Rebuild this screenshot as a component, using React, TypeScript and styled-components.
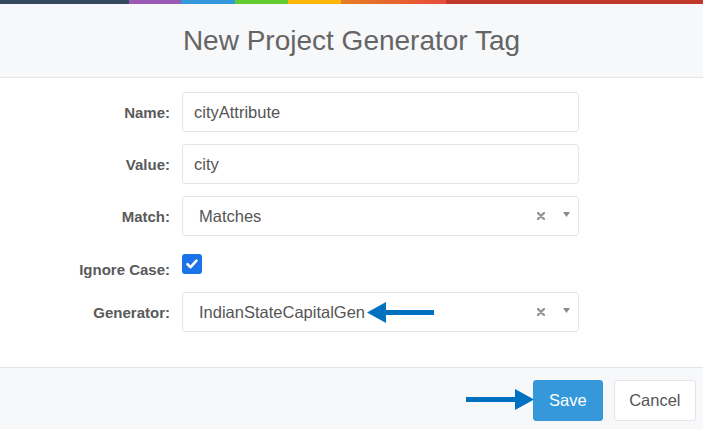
import React from "react";
import styled, { createGlobalStyle } from "styled-components";

const Global = createGlobalStyle`
  html, body { margin: 0; padding: 0; background: #ffffff; }
  body { font-family: "Liberation Sans", Arial, sans-serif; overflow: hidden; }
  * { box-sizing: border-box; }
`;

const Modal = styled.div`
  width: 703px;
  height: 429px;
  display: flex;
  flex-direction: column;
  overflow: hidden;
  background: #ffffff;
`;

const ColorLine = styled.div`
  height: 4px;
  flex: none;
  background: linear-gradient(
    to right,
    #34495e 0px, #34495e 129px,
    #9b59b6 129px, #9b59b6 181px,
    #3498db 181px, #3498db 235px,
    #62cb31 235px, #62cb31 288px,
    #ffb606 288px, #ffb606 341px,
    #e67e22 341px, #e74c3c 446px,
    #c0392b 446px, #c0392b 703px
  );
`;

const Header = styled.div`
  height: 74px;
  flex: none;
  display: flex;
  align-items: center;
  justify-content: center;
  background: #f7f8fa;
  border-bottom: 1px solid #e4e5e7;
`;

const Title = styled.h4`
  margin: 0;
  font-size: 28px;
  line-height: 28px;
  font-weight: 400;
  color: #656565;
`;

const Body = styled.div`
  flex: none;
  padding: 14px 0 35px;
  display: flex;
  flex-direction: column;
  gap: 12px;
`;

const Row = styled.div<{ $compact?: boolean }>`
  display: grid;
  grid-template-columns: 170px 397px;
  column-gap: 12px;
  align-items: ${(p) => (p.$compact ? "start" : "center")};
  height: ${(p) => (p.$compact ? "32px" : "40px")};
`;

const Label = styled.label<{ $offset?: number }>`
  text-align: right;
  font-size: 15px;
  line-height: 17px;
  font-weight: 700;
  color: #5a5a5a;
  padding-top: ${(p) => p.$offset ?? 0}px;
`;

const Input = styled.div`
  height: 40px;
  display: flex;
  align-items: center;
  padding: 0 11px;
  border: 1px solid #e4e5e7;
  border-radius: 4px;
  background: #ffffff;
  font-size: 16.5px;
  color: #555555;
`;

const Select = styled.div`
  position: relative;
  height: 40px;
  display: flex;
  align-items: center;
  padding: 0 8px 0 16px;
  border: 1px solid #e4e5e7;
  border-radius: 4px;
  background: #ffffff;
  font-size: 16.5px;
  color: #555555;
`;

const SelectValue = styled.span`
  flex: 1;
`;

const ClearIcon = styled.svg`
  width: 8px;
  height: 8px;
  flex: none;
  margin-right: 18px;
`;

const Caret = styled.svg`
  width: 7px;
  height: 5px;
  flex: none;
  transform: translateY(-2px);
`;

const Check = styled.span`
  width: 20px;
  height: 20px;
  margin-top: 6px;
  border-radius: 3px;
  background: #1a73e8;
  display: flex;
  align-items: center;
  justify-content: center;
`;

const Annotation = styled.svg<{ $left: number; $top: number }>`
  position: absolute;
  left: ${(p) => p.$left}px;
  top: ${(p) => p.$top}px;
  overflow: visible;
`;

const Footer = styled.div`
  position: relative;
  flex: 1;
  display: flex;
  justify-content: flex-end;
  align-items: flex-start;
  gap: 11px;
  padding: 12px 7px 0;
  background: #f7f8fa;
  border-top: 1px solid #e4e5e7;
`;

const Button = styled.button<{ $primary?: boolean }>`
  height: 41px;
  padding: ${(p) => (p.$primary ? "0 15px" : "0 14.5px")};
  border-radius: 3px;
  font-family: "Liberation Sans", Arial, sans-serif;
  font-size: 16.5px;
  cursor: pointer;
  border: 1px solid ${(p) => (p.$primary ? "#3498db" : "#e4e5e7")};
  background: ${(p) => (p.$primary ? "#3498db" : "#ffffff")};
  color: ${(p) => (p.$primary ? "#ffffff" : "#555555")};
`;

const ARROW = "#0070c0";

function SelectBox({ value, children }: { value: string; children?: React.ReactNode }) {
  return (
    <Select>
      <SelectValue>{value}</SelectValue>
      <ClearIcon viewBox="0 0 8 8">
        <path d="M1 1 L7 7 M7 1 L1 7" stroke="#959595" strokeWidth="2.4" strokeLinecap="round" />
      </ClearIcon>
      <Caret viewBox="0 0 7 5">
        <path d="M0 0 H7 L3.5 5 Z" fill="#8a8a8a" />
      </Caret>
      {children}
    </Select>
  );
}

export default function App() {
  return (
    <>
      <Global />
      <Modal>
        <ColorLine />
        <Header>
          <Title>New Project Generator Tag</Title>
        </Header>
        <Body>
          <Row>
            <Label>Name:</Label>
            <Input>cityAttribute</Input>
          </Row>
          <Row>
            <Label>Value:</Label>
            <Input>city</Input>
          </Row>
          <Row>
            <Label>Match:</Label>
            <SelectBox value="Matches" />
          </Row>
          <Row $compact>
            <Label $offset={13}>Ignore Case:</Label>
            <Check>
              <svg width="14" height="14" viewBox="0 0 14 14">
                <path d="M2.5 7.2 L5.6 10.2 L11.5 3.6" fill="none" stroke="#ffffff" strokeWidth="2.6" strokeLinecap="round" strokeLinejoin="round" />
              </svg>
            </Check>
          </Row>
          <Row>
            <Label>Generator:</Label>
            <SelectBox value="IndianStateCapitalGen">
              <Annotation $left={184} $top={9} width="67" height="21" viewBox="0 0 67 21">
                <path d="M0 10.5 L19 0 L19 8 L67 8 L67 13 L19 13 L19 21 Z" fill={ARROW} />
              </Annotation>
            </SelectBox>
          </Row>
        </Body>
        <Footer>
          <Annotation $left={466} $top={21} width="68" height="21" viewBox="0 0 68 21">
            <path d="M0 8 L49 8 L49 0 L68 10.5 L49 21 L49 13 L0 13 Z" fill={ARROW} />
          </Annotation>
          <Button $primary>Save</Button>
          <Button>Cancel</Button>
        </Footer>
      </Modal>
    </>
  );
}
